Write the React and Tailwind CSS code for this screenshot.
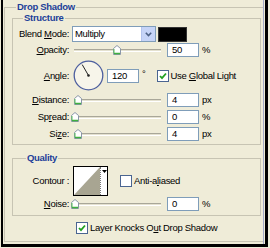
import React from "react";

function Thumb({ left }) {
  return (
    <svg
      width="8"
      height="10"
      viewBox="0 0 8 10"
      className="absolute top-0"
      style={{ left }}
    >
      <polygon points="0.5,3.5 4,0.5 7.5,3.5 7.5,9.5 0.5,9.5" fill="#ffffff" stroke="#8a97a8" />
      <line x1="1" y1="8.5" x2="7" y2="8.5" stroke="#3fb03f" strokeWidth="1.5" />
      <line x1="1" y1="4" x2="1" y2="8" stroke="#5cc45c" strokeWidth="1" />
    </svg>
  );
}

function Slider({ pos }) {
  return (
    <div className="relative w-[87px] h-[10px] flex items-center">
      <div className="w-full h-[3px] border-t border-t-[#a9a799] border-b border-b-white bg-[#e4e1d0]" />
      <Thumb left={pos - 4} />
    </div>
  );
}

function Input({ value, w = "w-[32px]" }) {
  return (
    <div className={`${w} h-[14px] bg-white border border-[#7f9db9] flex items-center pl-[4px] leading-none`}>
      {value}
    </div>
  );
}

function Check() {
  return (
    <div className="w-[12px] h-[12px] bg-white border border-[#4a6591] flex items-center justify-center shrink-0">
      <svg width="8" height="8" viewBox="0 0 8 8">
        <polyline points="1,4 3,6.2 7,1.5" fill="none" stroke="#21a121" strokeWidth="1.8" />
      </svg>
    </div>
  );
}

function Box() {
  return <div className="w-[12px] h-[12px] bg-white border border-[#4a6591] shrink-0" />;
}

function Label({ children }) {
  return <div className="w-[56px] text-right leading-none shrink-0">{children}</div>;
}

function U({ children }) {
  return <span className="underline underline-offset-[1px]">{children}</span>;
}

export default function App() {
  return (
    <div className="w-[270px] h-[248px] bg-[#efecd8] font-['Liberation_Sans',Arial,sans-serif] text-[9.5px] tracking-[-0.3px] text-black overflow-hidden">
      <div className="ml-[1px] w-[267px] h-[247px] border-l-2 border-r-[3px] border-b-[3px] border-black">
        <div className="w-[261px] h-full border-r border-[#a3aac6]">
          <fieldset className="ml-[1px] border border-r-0 border-[#c7c4b3] pb-[7px]">
            <legend className="ml-[11px] px-[1px] leading-[14px] font-bold text-[#1d3f98]">Drop Shadow</legend>

            {/* Structure */}
            <fieldset className="ml-[7px] w-[249px] -mt-[2px] border border-[#c7c4b3] pb-[3px]">
              <legend className="ml-[10px] px-[1px] leading-[12px] font-bold text-[#1d3f98]">Structure</legend>

              <div className="flex items-center h-[16px] mt-[2px]">
                <Label>Blend <U>M</U>ode:</Label>
                <div className="ml-[3px] w-[84px] h-[16px] bg-white border border-[#7f9db9] flex items-center">
                  <div className="flex-1 pl-[2px] leading-none">Multiply</div>
                  <div className="w-[14px] h-[14px] bg-[#c6d4f7] border-l border-[#b4c4ee] flex items-center justify-center">
                    <svg width="7" height="5" viewBox="0 0 7 5">
                      <polyline points="0.8,0.8 3.5,3.6 6.2,0.8" fill="none" stroke="#4d6185" strokeWidth="1.6" />
                    </svg>
                  </div>
                </div>
                <div className="ml-[2px] w-[29px] h-[15px] bg-black border border-[#333]" />
              </div>

              <div className="flex items-center h-[14px] mt-[1px]">
                <Label><U>O</U>pacity:</Label>
                <div className="ml-[5px]"><Slider pos={43} /></div>
                <div className="ml-[6px]"><Input value="50" /></div>
                <div className="ml-[3px] leading-none">%</div>
              </div>

              <div className="flex items-center h-[31px] mt-[3px]">
                <Label><U>A</U>ngle:</Label>
                <svg width="31" height="31" viewBox="0 0 31 31" className="ml-[4px]">
                  <circle cx="15.5" cy="15.5" r="14.3" fill="#f7f5ea" stroke="#4d5f9f" strokeWidth="1.3" />
                  <line x1="15.5" y1="15.5" x2="9.2" y2="4.6" stroke="#222" strokeWidth="1" />
                  <circle cx="15.5" cy="15.5" r="1.3" fill="#222" />
                </svg>
                <div className="ml-[3px]"><Input value="120" /></div>
                <div className="ml-[3px] leading-none self-start mt-[9px]">°</div>
                <div className="ml-[11px]"><Check /></div>
                <div className="ml-[2px] leading-none">Use <U>G</U>lobal Light</div>
              </div>

              <div className="flex items-center h-[14px] mt-[2px]">
                <Label><U>D</U>istance:</Label>
                <div className="ml-[5px]"><Slider pos={4} /></div>
                <div className="ml-[6px]"><Input value="4" /></div>
                <div className="ml-[3px] leading-none">px</div>
              </div>

              <div className="flex items-center h-[14px] mt-[3px]">
                <Label>Sp<U>r</U>ead:</Label>
                <div className="ml-[5px]"><Slider pos={1} /></div>
                <div className="ml-[6px]"><Input value="0" /></div>
                <div className="ml-[3px] leading-none">%</div>
              </div>

              <div className="flex items-center h-[14px] mt-[3px]">
                <Label>Si<U>z</U>e:</Label>
                <div className="ml-[5px]"><Slider pos={4} /></div>
                <div className="ml-[6px]"><Input value="4" /></div>
                <div className="ml-[3px] leading-none">px</div>
              </div>
            </fieldset>

            {/* Quality */}
            <fieldset className="ml-[7px] w-[249px] mt-[7px] border border-[#c7c4b3] pb-[4px]">
              <legend className="ml-[13px] px-[1px] leading-[12px] font-bold text-[#1d3f98]">Quality</legend>

              <div className="flex items-center h-[30px] mt-[2px]">
                <Label>Contour :</Label>
                <div className="ml-[4px] w-[35px] h-[30px] border border-black bg-white flex">
                  <svg width="26" height="28" viewBox="0 0 26 28">
                    <polygon points="0,28 26,0 26,28" fill="#a8a592" />
                  </svg>
                  <div className="flex-1 border-l border-dotted border-[#777] flex justify-center pt-[3px]">
                    <svg width="5" height="3" viewBox="0 0 5 3">
                      <polygon points="0,0 5,0 2.5,3" fill="#000" />
                    </svg>
                  </div>
                </div>
                <div className="ml-[12px]"><Box /></div>
                <div className="ml-[2px] leading-none">Anti-a<U>l</U>iased</div>
              </div>

              <div className="flex items-center h-[14px] mt-[1px]">
                <Label><U>N</U>oise:</Label>
                <div className="ml-[5px]"><Slider pos={1} /></div>
                <div className="ml-[6px]"><Input value="0" /></div>
                <div className="ml-[3px] leading-none">%</div>
              </div>
            </fieldset>

            <div className="flex items-center h-[12px] mt-[6px] ml-[71px]">
              <Check />
              <div className="ml-[2px] leading-none">Layer Knocks O<U>u</U>t Drop Shadow</div>
            </div>
          </fieldset>
        </div>
      </div>
    </div>
  );
}
